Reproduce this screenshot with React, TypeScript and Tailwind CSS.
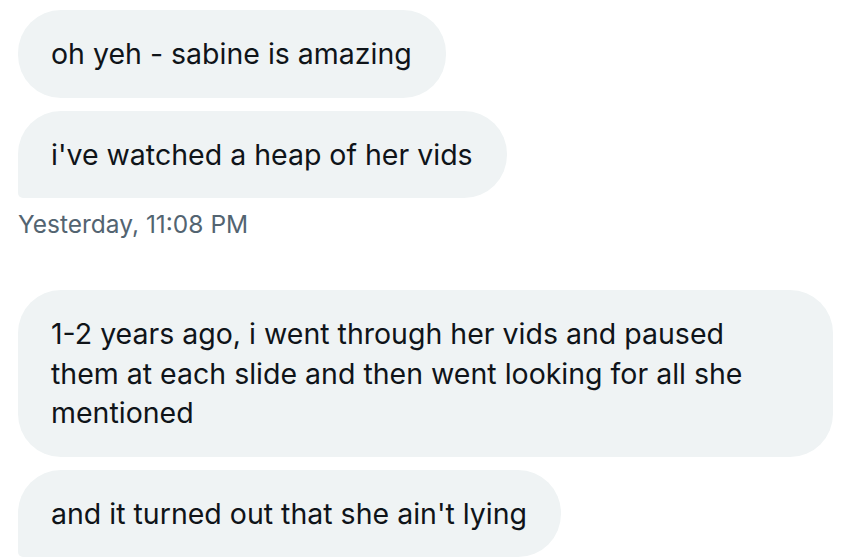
import React from "react";

type Msg = { text: string; last?: boolean };

const groups: { messages: Msg[]; time?: string }[] = [
  {
    messages: [
      { text: "oh yeh - sabine is amazing" },
      { text: "i've watched a heap of her vids", last: true },
    ],
    time: "Yesterday, 11:08 PM",
  },
  {
    messages: [
      {
        text: "1-2 years ago, i went through her vids and paused them at each slide and then went looking for all she mentioned",
      },
      { text: "and it turned out that she ain't lying", last: true },
    ],
  },
];

const Bubble: React.FC<{ msg: Msg }> = ({ msg }) => (
  <div
    className={`max-w-[815px] bg-[#eff3f4] text-[#0f1419] text-[28.5px] leading-[39.5px] pl-[33px] pr-[34px] py-[24px] rounded-[43px] ${
      msg.last ? "rounded-bl-[5px]" : ""
    }`}
  >
    {msg.text}
  </div>
);

export default function App() {
  return (
    <div
      className="min-h-screen bg-white pl-[18px] pr-[29px] pt-[10px] flex flex-col"
      style={{ fontFamily: "Inter, 'Noto Sans', sans-serif" }}
    >
      {groups.map((g, gi) => (
        <div key={gi} className={`flex flex-col items-start ${gi > 0 ? "mt-[51px]" : ""}`}>
          <div className="flex flex-col items-start gap-[13px]">
            {g.messages.map((m, i) => (
              <Bubble key={i} msg={m} />
            ))}
          </div>
          {g.time && (
            <div className="mt-[11px] text-[24.5px] leading-[30px] text-[#536471]">
              {g.time}
            </div>
          )}
        </div>
      ))}
    </div>
  );
}
